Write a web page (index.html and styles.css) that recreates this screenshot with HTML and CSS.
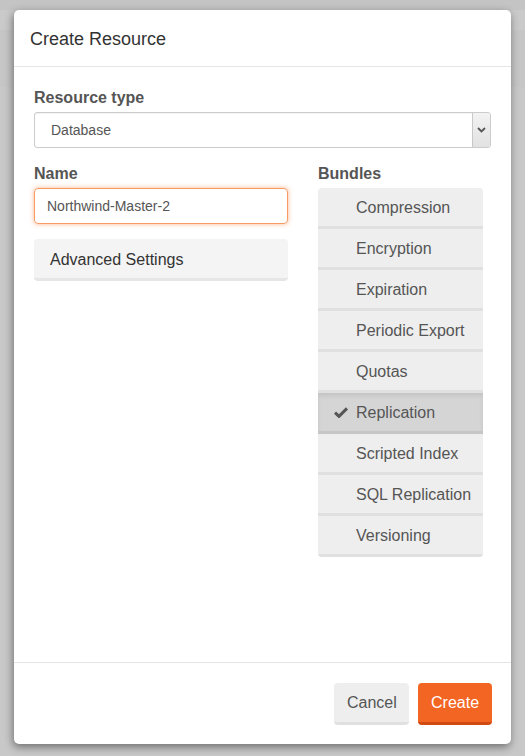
FILE: index.html
```html
<!DOCTYPE html>
<html>
<head>
<meta charset="utf-8">
<link rel="stylesheet" href="styles.css">
</head>
<body>
<div class="modal">
  <div class="modal-header">
    <h4 class="modal-title">Create Resource</h4>
  </div>
  <div class="modal-body">
    <label class="field-label">Resource type</label>
    <div class="select">
      <span class="select-value">Database</span>
      <span class="select-arrow">
        <svg width="9" height="6" viewBox="0 0 9 6"><path d="M1 1 L4.5 4.5 L8 1" fill="none" stroke="#555" stroke-width="1.8"/></svg>
      </span>
    </div>
    <div class="columns">
      <div class="col-left">
        <label class="field-label">Name</label>
        <div class="input">Northwind-Master-2</div>
        <div class="panel">Advanced Settings</div>
      </div>
      <div class="col-right">
        <label class="field-label">Bundles</label>
        <div class="bundles">
          <div class="bundle">Compression</div>
          <div class="bundle">Encryption</div>
          <div class="bundle">Expiration</div>
          <div class="bundle">Periodic Export</div>
          <div class="bundle">Quotas</div>
          <div class="bundle active">
            <svg class="check" width="14" height="11" viewBox="0 0 14 11"><path d="M1 5.6 L5 9.4 L13 1.4" fill="none" stroke="#555" stroke-width="3"/></svg>
            Replication
          </div>
          <div class="bundle">Scripted Index</div>
          <div class="bundle">SQL Replication</div>
          <div class="bundle">Versioning</div>
        </div>
      </div>
    </div>
  </div>
  <div class="modal-footer">
    <button class="btn btn-default">Cancel</button>
    <button class="btn btn-primary">Create</button>
  </div>
</div>
</body>
</html>
```
FILE: styles.css
```css
html, body {
  margin: 0;
  padding: 0;
}
body {
  width: 525px;
  height: 756px;
  overflow: hidden;
  font-family: "Liberation Sans", Arial, sans-serif;
  background: linear-gradient(to bottom, #c4c4c4 0, #c4c4c4 10px, #cacaca 10px, #cacaca 30px, #c6c6c6 30px, #c6c6c6 87px, #c8c8c8 87px);
  padding-top: 10px;
  box-sizing: border-box;
}
.modal {
  width: 497px;
  height: 734px;
  margin: 0 auto;
  background: #fff;
  border-radius: 5px;
  box-shadow: -1px 3px 8px rgba(0, 0, 0, 0.45);
  display: flex;
  flex-direction: column;
  box-sizing: border-box;
}
.modal-header {
  height: 56px;
  border-bottom: 1px solid #e5e5e5;
  padding: 0 16px;
  display: flex;
  align-items: center;
}
.modal-title {
  margin: 0;
  font-size: 18px;
  font-weight: normal;
  color: #333;
  line-height: 22px;
  padding-top: 1px;
}
.modal-body {
  flex: 1;
  padding: 20px 20px 0;
}
.field-label {
  display: block;
  font-size: 16px;
  font-weight: bold;
  color: #555;
  line-height: 22px;
  margin-bottom: 3px;
}
.select {
  height: 36px;
  border: 1px solid #ccc;
  border-radius: 3px;
  box-sizing: border-box;
  display: flex;
  align-items: stretch;
  box-shadow: inset 0 1px 1px rgba(0,0,0,0.05);
}
.select-value {
  flex: 1;
  padding-left: 16px;
  font-size: 14px;
  color: #555;
  line-height: 34px;
}
.select-arrow {
  width: 17px;
  border-left: 1px solid #c8c8c8;
  background: linear-gradient(to bottom, #f2f2f2, #e2e2e2);
  display: flex;
  align-items: center;
  justify-content: center;
  border-radius: 0 2px 2px 0;
}
.columns {
  display: grid;
  grid-template-columns: 254px 1fr;
  column-gap: 30px;
  margin-top: 15px;
}
.input {
  height: 36px;
  box-sizing: border-box;
  border: 1px solid #f79a63;
  border-radius: 4px;
  box-shadow: 0 0 5px rgba(246, 120, 50, 0.55);
  padding-left: 12px;
  font-size: 14px;
  line-height: 34px;
  color: #555;
}
.panel {
  margin-top: 15px;
  height: 42px;
  box-sizing: border-box;
  background: #f4f4f4;
  border-bottom: 3px solid #e6e6e6;
  border-radius: 4px;
  padding-left: 16px;
  padding-top: 2px;
  font-size: 16px;
  color: #333;
  line-height: 37px;
}
.bundles {
  width: 165px;
  border-radius: 4px;
  overflow: hidden;
}
.bundle {
  position: relative;
  height: 41px;
  box-sizing: border-box;
  background: #eeeeee;
  border-bottom: 3px solid #e0e0e0;
  padding-left: 38px;
  padding-top: 1px;
  font-size: 16px;
  color: #555;
  line-height: 37px;
}
.bundle.active {
  background: #d5d5d5;
  border-bottom-color: #c6c6c6;
  box-shadow: inset 0 3px 4px rgba(0, 0, 0, 0.08);
}
.check {
  position: absolute;
  left: 16px;
  top: 14px;
}
.modal-footer {
  height: 82px;
  box-sizing: border-box;
  border-top: 1px solid #e5e5e5;
  padding: 20px 19px 0 20px;
  display: flex;
  justify-content: flex-end;
  align-items: flex-start;
  gap: 9px;
}
.btn {
  height: 42px;
  box-sizing: border-box;
  border: none;
  border-radius: 4px;
  font-family: "Liberation Sans", Arial, sans-serif;
  font-size: 16px;
  padding: 0 13px;
  line-height: 39px;
  margin: 0;
}
.btn-default {
  width: 75px;
  background: #eeeeee;
  border-bottom: 3px solid #e0e0e0;
  color: #555;
}
.btn-primary {
  width: 74px;
  background: #f36523;
  border-bottom: 3px solid #d14a0f;
  color: #fff;
}
```
